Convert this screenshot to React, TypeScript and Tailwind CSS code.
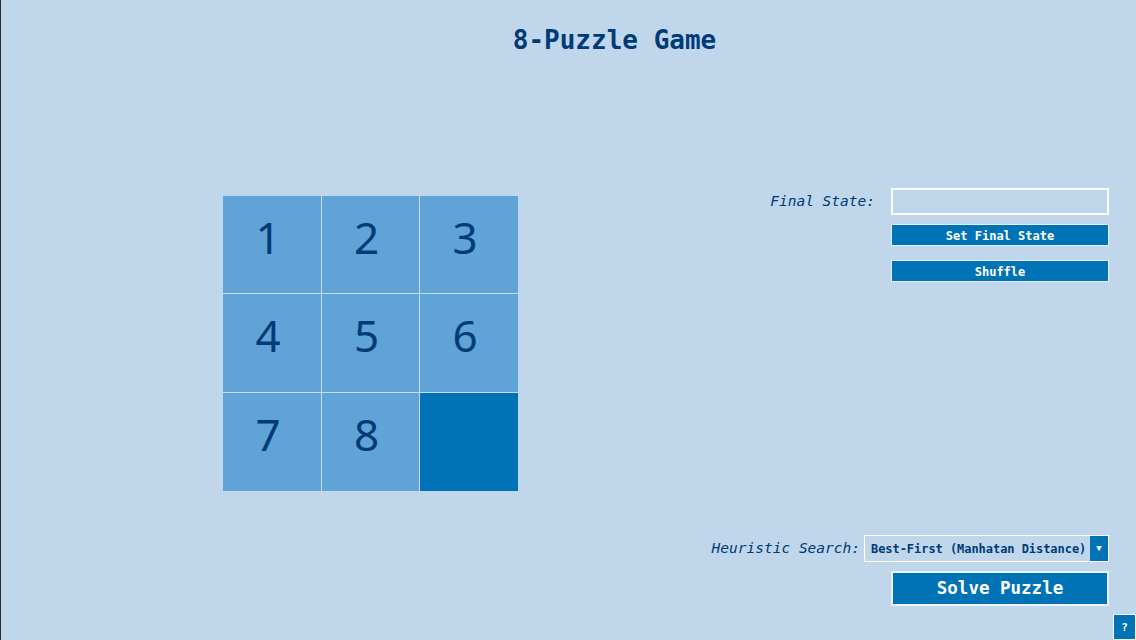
import React from "react";

const tiles = [1, 2, 3, 4, 5, 6, 7, 8, 0];

export default function App() {
  return (
    <div
      className="relative w-[1136px] h-[640px] overflow-hidden bg-[#bfd6eb] border-l border-[#2b2b2b] text-[#003b78]"
      style={{ fontFamily: '"DejaVu Sans Mono", "Liberation Mono", monospace' }}
    >
      <div className="h-[80px] flex items-center justify-center pl-[92px]">
        <h1 className="text-[26px] font-bold leading-none">8-Puzzle Game</h1>
      </div>

      <div className="mt-[108px] flex h-[418px]">
        <div className="ml-[222px] mt-[8px]">
          <div className="grid grid-cols-[98px_97px_98px] grid-rows-[97px_98px_98px] gap-[1px] bg-[#c9ddef] w-[295px] h-[295px]">
            {tiles.map((t) =>
              t === 0 ? (
                <div key={t} className="bg-[#0072b6]" />
              ) : (
                <div
                  key={t}
                  className="bg-[#5fa3d7] flex items-center justify-center pr-[8px] pb-[16px] text-[44px] leading-none text-[#003b78]"
                  style={{ fontFamily: '"Noto Sans", "Open Sans", sans-serif' }}
                >
                  {t}
                </div>
              )
            )}
          </div>
        </div>

        <div className="ml-auto mr-[27px] flex flex-col justify-between items-end">
          <div className="flex flex-col items-end">
            <div className="flex items-center gap-[16px]">
              <span className="italic text-[14.5px]">Final State:</span>
              <input
                className="w-[218px] h-[27px] border-2 border-white bg-[#bfd6eb] outline-none"
                type="text"
              />
            </div>
            <button className="mt-[9px] w-[218px] h-[22px] bg-[#0072b6] border border-[#e6eef7] text-white text-[12px] font-bold leading-none pt-[1px]">
              Set Final State
            </button>
            <button className="mt-[14px] w-[218px] h-[22px] bg-[#0072b6] border border-[#e6eef7] text-white text-[12px] font-bold leading-none pt-[1px]">
              Shuffle
            </button>
          </div>

          <div className="flex flex-col items-end">
            <div className="flex items-center gap-[4px]">
              <span className="italic text-[14.5px]">Heuristic Search:</span>
              <div className="w-[245px] h-[27px] border border-white flex items-stretch bg-[#bfd6eb]">
                <div className="flex-1 flex items-center pl-[6px] text-[12px] font-bold whitespace-nowrap tracking-[-0.05px]">
                  Best-First (Manhatan Distance)
                </div>
                <div className="w-[18px] bg-[#0072b6] flex items-center justify-center text-white text-[9px]">
                  ▼
                </div>
              </div>
            </div>
            <button className="mt-[9px] w-[218px] h-[35px] bg-[#0072b6] border-2 border-[#eef4fa] text-white text-[17.5px] font-bold leading-none">
              Solve Puzzle
            </button>
          </div>
        </div>
      </div>

      <button className="absolute right-0 bottom-0 w-[23px] h-[26px] bg-[#0072b6] border border-white text-white text-[11px] font-bold leading-none">
        ?
      </button>
    </div>
  );
}
